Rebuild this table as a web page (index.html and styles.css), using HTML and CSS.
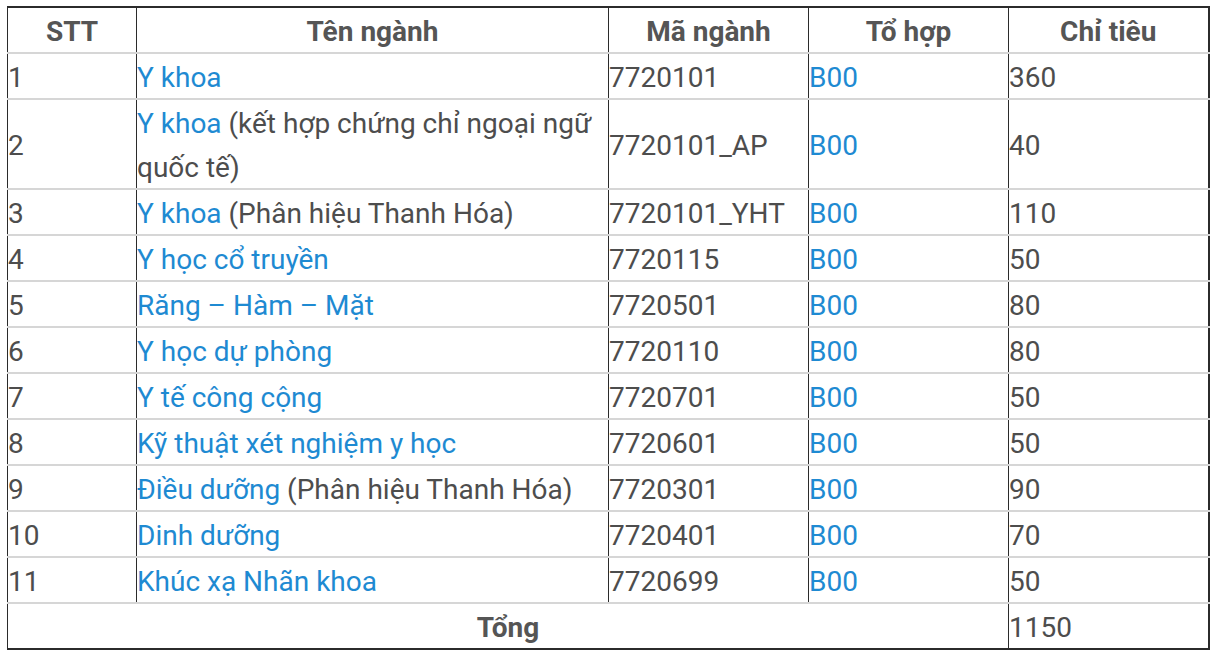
FILE: index.html
```html
<!DOCTYPE html>
<html lang="vi">
<head>
<meta charset="utf-8">
<title>Chỉ tiêu tuyển sinh</title>
<link rel="stylesheet" href="styles.css">
</head>
<body>
<div class="wrap">
<table class="quota">
<colgroup>
<col class="c-stt"><col class="c-name"><col class="c-code"><col class="c-combo"><col class="c-quota">
</colgroup>
<thead>
<tr><th><span class="t">STT</span></th><th><span class="t">Tên ngành</span></th><th><span class="t">Mã ngành</span></th><th><span class="t">Tổ hợp</span></th><th><span class="t">Chỉ tiêu</span></th></tr>
</thead>
<tbody>
<tr><td><span class="t">1</span></td><td><span class="t"><a href="#">Y khoa</a></span></td><td><span class="t">7720101</span></td><td><span class="t"><a href="#">B00</a></span></td><td><span class="t">360</span></td></tr>
<tr><td><span class="t">2</span></td><td><span class="t"><a href="#">Y khoa</a> (kết hợp chứng chỉ ngoại ngữ quốc tế)</span></td><td><span class="t">7720101_AP</span></td><td><span class="t"><a href="#">B00</a></span></td><td><span class="t">40</span></td></tr>
<tr><td><span class="t">3</span></td><td><span class="t"><a href="#">Y khoa</a> (Phân hiệu Thanh Hóa)</span></td><td><span class="t">7720101_YHT</span></td><td><span class="t"><a href="#">B00</a></span></td><td><span class="t">110</span></td></tr>
<tr><td><span class="t">4</span></td><td><span class="t"><a href="#">Y học cổ truyền</a></span></td><td><span class="t">7720115</span></td><td><span class="t"><a href="#">B00</a></span></td><td><span class="t">50</span></td></tr>
<tr><td><span class="t">5</span></td><td><span class="t"><a href="#">Răng – Hàm – Mặt</a></span></td><td><span class="t">7720501</span></td><td><span class="t"><a href="#">B00</a></span></td><td><span class="t">80</span></td></tr>
<tr><td><span class="t">6</span></td><td><span class="t"><a href="#">Y học dự phòng</a></span></td><td><span class="t">7720110</span></td><td><span class="t"><a href="#">B00</a></span></td><td><span class="t">80</span></td></tr>
<tr><td><span class="t">7</span></td><td><span class="t"><a href="#">Y tế công cộng</a></span></td><td><span class="t">7720701</span></td><td><span class="t"><a href="#">B00</a></span></td><td><span class="t">50</span></td></tr>
<tr><td><span class="t">8</span></td><td><span class="t"><a href="#">Kỹ thuật xét nghiệm y học</a></span></td><td><span class="t">7720601</span></td><td><span class="t"><a href="#">B00</a></span></td><td><span class="t">50</span></td></tr>
<tr><td><span class="t">9</span></td><td><span class="t"><a href="#">Điều dưỡng</a> (Phân hiệu Thanh Hóa)</span></td><td><span class="t">7720301</span></td><td><span class="t"><a href="#">B00</a></span></td><td><span class="t">90</span></td></tr>
<tr><td><span class="t">10</span></td><td><span class="t"><a href="#">Dinh dưỡng</a></span></td><td><span class="t">7720401</span></td><td><span class="t"><a href="#">B00</a></span></td><td><span class="t">70</span></td></tr>
<tr><td><span class="t">11</span></td><td><span class="t"><a href="#">Khúc xạ Nhãn khoa</a></span></td><td><span class="t">7720699</span></td><td><span class="t"><a href="#">B00</a></span></td><td><span class="t">50</span></td></tr>
<tr class="total"><td colspan="4" class="total-label"><span class="t">Tổng</span></td><td><span class="t">1150</span></td></tr>
</tbody>
</table>
</div>
</body>
</html>
```

FILE: styles.css
```css
html, body {
  margin: 0;
  padding: 0;
  background: #fff;
}
.wrap {
  padding: 6px 9px 0 7px;
}
.quota {
  width: 1201px;
  border-collapse: collapse;
  table-layout: fixed;
  font-family: Roboto, "Liberation Sans", sans-serif;
  font-size: 28px;
  line-height: 44px;
  color: #4d4d4d;
  border-top: 2px solid #2b2b2b;
  border-bottom: 2px solid #2b2b2b;
  border-left: 1px solid #2b2b2b;
  border-right: 2px solid #2b2b2b;
}
.c-stt { width: 129px; }
.c-name { width: 472px; }
.c-code { width: 200px; }
.c-combo { width: 200px; }
.c-quota { width: 200px; }
.quota th, .quota td {
  padding: 0;
  vertical-align: middle;
  text-align: left;
  border-left: 1px solid #2b2b2b;
}
.quota .t {
  line-height: 30px;
  vertical-align: -2px;
}
.quota th {
  font-weight: 700;
  text-align: center;
  color: #555;
}
.quota tr {
  border-bottom: 2px solid #d6d6d6;
}
.quota tr.total {
  border-bottom: none;
}
.quota td.total-label {
  font-weight: 700;
  text-align: center;
  color: #555;
}
.quota a {
  color: #1e8ad2;
  text-decoration: none;
}
```
